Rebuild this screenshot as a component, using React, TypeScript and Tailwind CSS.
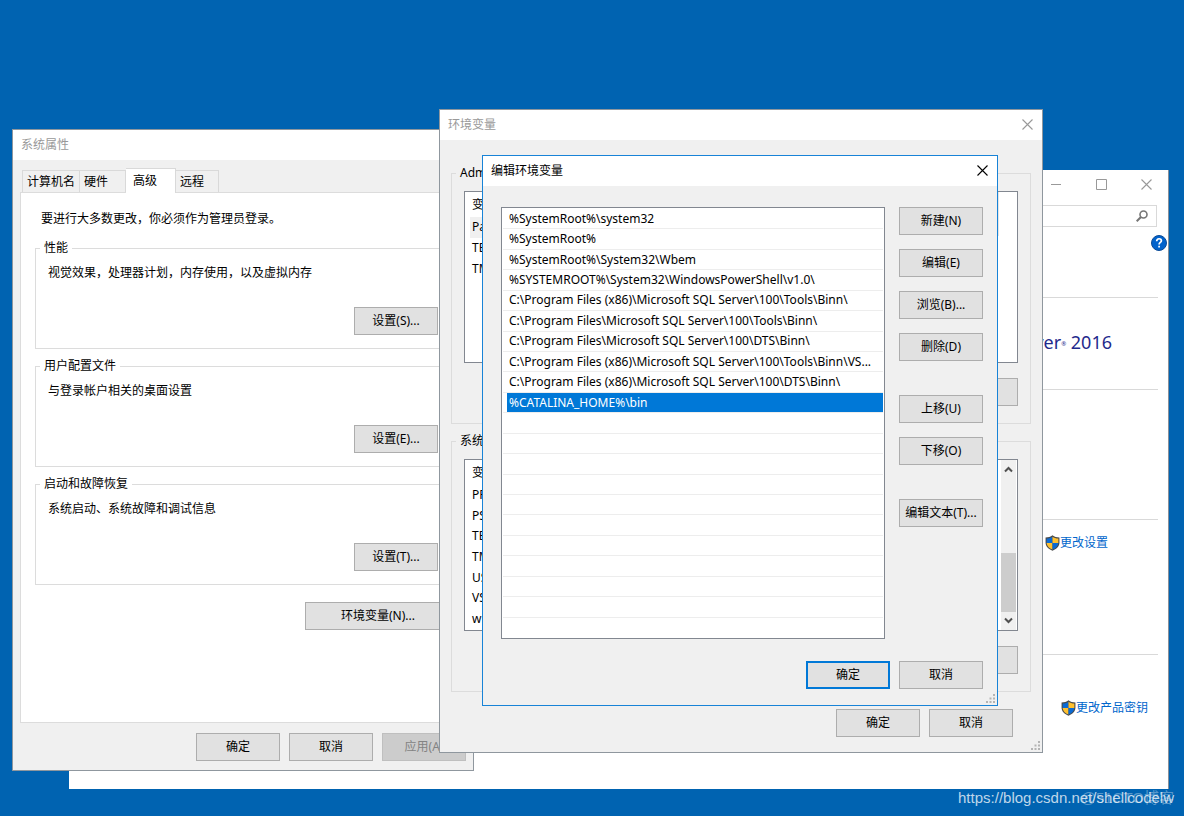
import type { ReactNode } from "react";
import clsx from "clsx";

const tabs = ["计算机名", "硬件", "高级", "远程"];

const tabWidths = ["w-[58px]", "w-[46px]", "w-[50px]", "w-[43px]"];

const settingGroups = [
  { title: "性能", text: "视觉效果，处理器计划，内存使用，以及虚拟内存", action: "设置(S)..." },
  { title: "用户配置文件", text: "与登录帐户相关的桌面设置", action: "设置(E)..." },
  { title: "启动和故障恢复", text: "系统启动、系统故障和调试信息", action: "设置(T)..." }
];

const userVariables = ["Path", "TEMP", "TMP"];
const systemVariables = ["PROC", "PSMod", "TEMP", "TMP", "USER", "VS140", "windir"];

const paths = [
  "%SystemRoot%\\system32",
  "%SystemRoot%",
  "%SystemRoot%\\System32\\Wbem",
  "%SYSTEMROOT%\\System32\\WindowsPowerShell\\v1.0\\",
  "C:\\Program Files (x86)\\Microsoft SQL Server\\100\\Tools\\Binn\\",
  "C:\\Program Files\\Microsoft SQL Server\\100\\Tools\\Binn\\",
  "C:\\Program Files\\Microsoft SQL Server\\100\\DTS\\Binn\\",
  "C:\\Program Files (x86)\\Microsoft SQL Server\\100\\Tools\\Binn\\VS...",
  "C:\\Program Files (x86)\\Microsoft SQL Server\\100\\DTS\\Binn\\",
  "%CATALINA_HOME%\\bin"
];
const ROWS = 21;

const editActions = [
  ["新建(N)", "编辑(E)", "浏览(B)...", "删除(D)"],
  ["上移(U)", "下移(O)"],
  ["编辑文本(T)..."]
];

function PushButton({ children, primary, disabled, wide, label }: { children?: ReactNode; primary?: boolean; disabled?: boolean; wide?: boolean; label?: string }) {
  return (
    <button
      type="button"
      disabled={disabled}
      aria-label={label}
      className={clsx(
        "block h-7 shrink-0 whitespace-nowrap text-center",
        wide ? "w-[146px]" : "w-[84px]",
        primary ? "border-2 border-[#0078d7]" : "border",
        disabled ? "border-[#bfbfbf] bg-[#cccccc] text-[#838383]" : "bg-[#e1e1e1]",
        !primary && !disabled && "border-[#adadad]"
      )}
    >
      {children}
    </button>
  );
}

function CloseIcon() {
  return (
    <svg viewBox="0 0 11 11" className="size-[11px]" fill="none" stroke="currentColor" strokeWidth="1.1">
      <path d="M.5.5l10 10M10.5.5l-10 10" />
    </svg>
  );
}

function TitleBar({ title, active, closable = true }: { title: string; active?: boolean; closable?: boolean }) {
  return (
    <header className={clsx("flex h-[30px] items-center justify-between bg-white pb-px pl-2 pr-[9px]", active ? "text-black" : "text-[#999999]")}>
      <h2>{title}</h2>
      {closable && (
        <button type="button" aria-label="关闭">
          <CloseIcon />
        </button>
      )}
    </header>
  );
}

function Group({ title, className, children }: { title: string; className?: string; children: ReactNode }) {
  return (
    <fieldset className={clsx("border border-[#dcdcdc] px-3", className)}>
      <legend className="-ml-2 px-1">{title}</legend>
      {children}
    </fieldset>
  );
}

function ResizeGrip() {
  return (
    <svg viewBox="0 0 9 9" className="absolute bottom-[2px] right-[2px] size-[9px]" fill="#b4b4b4">
      <path d="M7 0h2v2H7zM7 3.5h2v2H7zM7 7h2v2H7zM3.500 3.500h2v2h-2zM3.500 7h2v2h-2zM0 7h2v2H0z" />
    </svg>
  );
}

function Shield() {
  return (
    <svg viewBox="0 0 14 15" className="h-4 w-[15px]">
      <path d="M7 .3C5.300 1.700 3 2.300.5 2.300V7c0 3.600 2.800 6.300 6.500 7.700C10.700 13.300 13.500 10.600 13.500 7V2.300C11 2.300 8.700 1.700 7 .3z" fill="#4a4a4a" />
      <path d="M7 1.600v5.900H1.500V3.300C3.800 3.200 5.600 2.700 7 1.600z" fill="#0a6ad4" />
      <path d="M7 1.600v5.900h5.500V3.300C10.200 3.200 8.400 2.700 7 1.600z" fill="#ffc02e" />
      <path d="M7 7.500H1.500c.2 2.800 2.300 5 5.500 6.200z" fill="#ffc02e" />
      <path d="M7 7.500h5.500c-.2 2.800-2.300 5-5.500 6.200z" fill="#0a6ad4" />
    </svg>
  );
}

function SystemWindow() {
  return (
    <section className="absolute bottom-[27px] left-[69px] right-[15px] top-[170px] border-r border-[#8a9099] bg-white pr-[10px]">
      <div className="flex h-7 items-center justify-end gap-[34px] pr-[6px] text-[#999999]">
        <button type="button" aria-label="最小化">
          <svg viewBox="0 0 11 11" className="size-[11px]" stroke="currentColor">
            <path d="M0 5.500h10" />
          </svg>
        </button>
        <button type="button" aria-label="最大化">
          <svg viewBox="0 0 11 11" className="size-[11px]" fill="none" stroke="currentColor">
            <path d="M.5.5h10v10H.5z" />
          </svg>
        </button>
        <button type="button" aria-label="关闭">
          <CloseIcon />
        </button>
      </div>
      <div className="mr-px mt-[7px] flex h-[22px] items-center border border-[#d9d9d9] pr-2">
        <input type="search" aria-label="搜索" className="h-full min-w-0 flex-1 outline-none" />
        <svg viewBox="0 0 12 12" className="size-3" fill="none" stroke="#767676">
          <circle cx="7.500" cy="4.500" r="3.500" strokeWidth="1.600" />
          <path d="M5 7L.7 11.300" strokeWidth="2" />
        </svg>
      </div>
      <div className="-mr-[9px] mt-2 flex justify-end">
        <button type="button" aria-label="帮助">
          <svg viewBox="0 0 16 16" className="size-4">
            <circle cx="8" cy="8" r="7.500" fill="#0062cc" stroke="#0b4a96" />
            <path d="M5.700 6.200c0-3.200 4.700-3.200 4.700-.4C10.400 7.500 8.100 7.400 8.100 9.400M8.100 10.700v1.900" fill="none" stroke="#fff" strokeWidth="1.700" />
          </svg>
        </button>
      </div>
      <div className="mt-[46px] flex h-[93px] items-center justify-end border-y border-[#d9d9d9] pb-1 pr-[46px]">
        <p className="text-lg leading-6 text-[#1f2a8c]">
          Windows Server<sup className="text-[6px]">®</sup> 2016
        </p>
      </div>
      <div className="mt-[129px] flex justify-end border-t border-[#d9d9d9] pr-[50px] pt-[15px]">
        <a href="#settings" className="flex items-center text-[#0066cc]">
          <Shield />
          更改设置
        </a>
      </div>
      <div className="mt-[103px] flex justify-end border-t border-[#d9d9d9] pr-[10px] pt-[45px]">
        <a href="#product-key" className="flex items-center text-[#0066cc]">
          <Shield />
          更改产品密钥
        </a>
      </div>
    </section>
  );
}

function SystemProperties() {
  return (
    <section className="absolute left-3 top-[129px] w-[462px] border border-[#8f979e] bg-[#f0f0f0]">
      <TitleBar title="系统属性" closable={false} />
      <div className="px-[7px] pb-[9px] pt-2">
        <nav className="flex items-end pl-[2px]" role="tablist">
          {tabs.map((tab, i) => {
            const selected = tab === "高级";
            return (
              <button
                key={tab}
                type="button"
                role="tab"
                aria-selected={selected}
                className={clsx(
                  "border-t border-r border-[#d9d9d9] text-left",
                  tabWidths[i],
                  i === 0 && "border-l",
                  selected ? "relative -mb-px h-[25px] bg-white pl-[7px]" : "h-[22px] pl-1"
                )}
              >
                {tab}
              </button>
            );
          })}
        </nav>
        <div className="border border-[#dcdcdc] bg-white px-[14px] pb-[92px] pt-[18px]">
          <p className="mb-[13px] pl-[6px]">要进行大多数更改，你必须作为管理员登录。</p>
          <div className="flex flex-col gap-[9px]">
            {settingGroups.map((group) => (
              <Group key={group.title} title={group.title} className="pb-[13px] pt-[9px]">
                <p>{group.text}</p>
                <div className="mt-[26px] flex justify-end">
                  <PushButton>{group.action}</PushButton>
                </div>
              </Group>
            ))}
          </div>
          <div className="mt-[17px] flex justify-end">
            <PushButton wide>环境变量(N)...</PushButton>
          </div>
        </div>
        <footer className="mt-[10px] flex justify-end gap-[9px]">
          <PushButton>确定</PushButton>
          <PushButton>取消</PushButton>
          <PushButton disabled>应用(A)</PushButton>
        </footer>
      </div>
    </section>
  );
}

function ScrollBar() {
  return (
    <div className="flex w-[15px] flex-col items-center justify-between bg-[#f0f0f0] py-[6px]">
      <svg viewBox="0 0 9 7" className="h-[7px] w-[9px]" fill="none" stroke="#505050" strokeWidth="2">
        <path d="M1 5.500L4.500 2 8 5.500" />
      </svg>
      <div className="mb-[5px] mt-auto h-[59px] w-full bg-[#cdcdcd]" />
      <svg viewBox="0 0 9 7" className="h-[7px] w-[9px]" fill="none" stroke="#505050" strokeWidth="2">
        <path d="M1 1.500L4.500 5 8 1.500" />
      </svg>
    </div>
  );
}

function VariableGroup({ title, rows, selected, scroll }: { title: string; rows: string[]; selected?: string; scroll?: boolean }) {
  return (
    <Group title={title} className="pb-[17px] pt-[10px]">
      <div className="flex h-[172px] border border-[#828790] bg-white pl-[5px] pr-px">
        <div className="flex-1">
          <table className={clsx("w-full text-left", scroll ? "h-[169px]" : "h-[87px]")}>
            <thead>
              <tr className="h-[25px]">
                <th className="pl-[2px] font-normal">变量</th>
              </tr>
            </thead>
            <tbody>
              {rows.map((name) => (
                <tr key={name}>
                  <td className={clsx("pl-[2px] leading-4", name === selected && "bg-[#f0f0f0]")}>{name}</td>
                </tr>
              ))}
            </tbody>
          </table>
        </div>
        {scroll ? <ScrollBar /> : <div className="h-11 w-[18px] border-l border-[#e5e5e5] bg-white" />}
      </div>
      <div className="mt-[15px] flex justify-end">
        <PushButton label="删除" />
      </div>
    </Group>
  );
}

function EnvironmentVariables() {
  return (
    <section className="absolute left-[439px] top-[109px] w-[604px] border border-[#8f979e] bg-[#f0f0f0]">
      <TitleBar title="环境变量" />
      <div className="flex flex-col gap-[9px] px-[11px] pt-[25px]">
        <VariableGroup title="Adm" rows={userVariables} selected="Path" />
        <VariableGroup title="系统变量" rows={systemVariables} scroll />
      </div>
      <footer className="flex justify-end gap-[9px] pb-[15px] pr-[29px] pt-[17px]">
        <PushButton>确定</PushButton>
        <PushButton>取消</PushButton>
      </footer>
      <ResizeGrip />
    </section>
  );
}

function EditVariable() {
  return (
    <section className="absolute left-[482px] top-[155px] w-[516px] border border-[#1883d7] bg-[#f0f0f0]">
      <TitleBar title="编辑环境变量" active />
      <div className="flex gap-[14px] pl-[18px] pr-[14px] pt-[21px]">
        <ul className="grid h-[432px] min-w-0 flex-1 auto-rows-fr border border-[#828790] bg-white px-px pt-px">
          {Array.from({ length: ROWS }, (_, i) => (
            <li key={i} className={clsx("min-h-0 pl-1", i < ROWS - 1 && "border-b border-[#ededed]")}>
              {paths[i] && (
                <span className={clsx("flex h-full items-center whitespace-nowrap pl-[2px] leading-5", i === 9 && "bg-[#0078d7] text-white")}>{paths[i]}</span>
              )}
            </li>
          ))}
        </ul>
        <div className="flex flex-col gap-[34px]">
          {editActions.map((actions) => (
            <div key={actions[0]} className="flex flex-col gap-[14px]">
              {actions.map((label) => (
                <PushButton key={label}>{label}</PushButton>
              ))}
            </div>
          ))}
        </div>
      </div>
      <footer className="flex justify-end gap-[9px] pb-4 pr-[14px] pt-[22px]">
        <PushButton primary>确定</PushButton>
        <PushButton>取消</PushButton>
      </footer>
      <ResizeGrip />
    </section>
  );
}

export default function App() {
  return (
    <main className="relative min-h-screen overflow-hidden bg-[#0063b1] font-['Noto_Sans','Noto_Sans_CJK_SC',sans-serif] text-xs leading-4 text-black">
      <SystemWindow />
      <SystemProperties />
      <EnvironmentVariables />
      <EditVariable />
      <p className="absolute bottom-2 right-[10px] font-['Liberation_Sans','Noto_Sans_CJK_SC',sans-serif] text-[15px] leading-5 text-white/35">@51CTO博客</p>
      <p className="absolute bottom-2 right-[10px] font-['Liberation_Sans',sans-serif] text-[15px] leading-5 text-white/75">https://blog.csdn.net/shellcodelw</p>
    </main>
  );
}
